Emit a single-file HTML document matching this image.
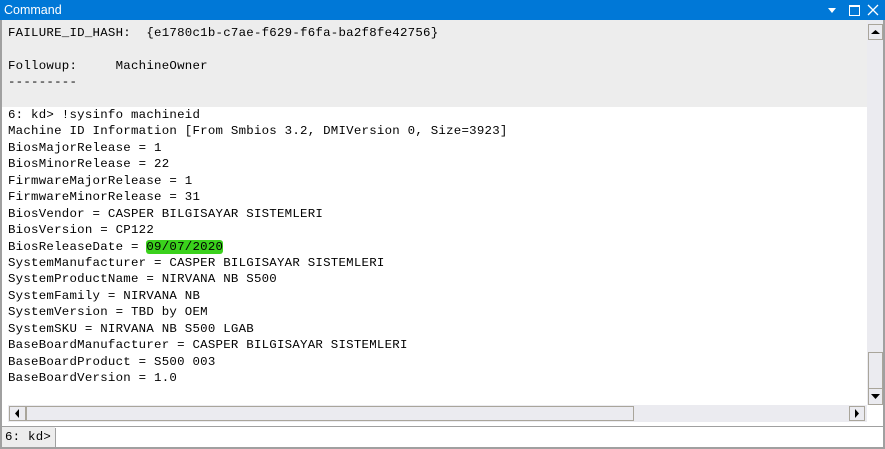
<!DOCTYPE html>
<html><head><style>
*{margin:0;padding:0;box-sizing:border-box}
body{width:885px;height:449px;overflow:hidden;background:#fff;position:relative;font-family:"Liberation Mono",monospace}
.title{position:absolute;left:0;top:0;width:885px;height:20px;background:#0078d7;color:#fff;font:12.5px "Liberation Sans",sans-serif;padding:3px 0 0 4px}
.frame{position:absolute;left:0;top:20px;width:885px;height:429px;border-left:2px solid #a0a0a0;border-right:2px solid #a0a0a0;border-bottom:2px solid #a0a0a0}
.gray{position:absolute;left:2px;top:20px;width:865px;height:87px;background:#ededed}
pre{position:absolute;left:8px;font-size:12.4px;letter-spacing:0.25px;line-height:16.43px;color:#000;font-family:"Liberation Mono",monospace}
.vs{position:absolute;left:867px;top:20px;width:16px;height:385px;background:#ebebf0}
.btn{position:absolute;border:1px solid #a9a59b;background:#ebebf0}
.hs{position:absolute;left:8px;top:405px;width:859px;height:17px;background:#ebebf0}
.hl{position:absolute;left:2px;top:426px;width:881px;height:1px;background:#a0a0a0}
.pr{position:absolute;left:2px;top:427px;width:53px;height:20px;background:#ededed;font-size:12.4px;letter-spacing:0.25px;padding:3px 0 0 3px}
.inp{position:absolute;left:55px;top:428px;width:828px;height:19px;border-left:1px solid #a0a0a0;background:#fff}
</style></head><body>
<div class="title">Command</div>
<svg style="position:absolute;left:825px;top:4px" width="60" height="14">
<polygon points="3,4 11,4 7,9" fill="#fff"/>
<rect x="24.5" y="1.5" width="10" height="10" fill="none" stroke="#fff"/><rect x="24" y="1" width="11" height="2" fill="#fff"/>
<path d="M43 1 L53 11 M53 1 L43 11" stroke="#fff" stroke-width="1.3"/>
</svg>
<div class="frame"></div>
<div class="gray"></div>
<pre style="top:25px">FAILURE_ID_HASH:  {e1780c1b-c7ae-f629-f6fa-ba2f8fe42756}

Followup:     MachineOwner
---------
</pre>
<pre style="top:107px">6: kd&gt; !sysinfo machineid
Machine ID Information [From Smbios 3.2, DMIVersion 0, Size=3923]
BiosMajorRelease = 1
BiosMinorRelease = 22
FirmwareMajorRelease = 1
FirmwareMinorRelease = 31
BiosVendor = CASPER BILGISAYAR SISTEMLERI
BiosVersion = CP122
BiosReleaseDate = <span style="background:#3ad11c;border-radius:3px">09/07/2020</span>
SystemManufacturer = CASPER BILGISAYAR SISTEMLERI
SystemProductName = NIRVANA NB S500
SystemFamily = NIRVANA NB
SystemVersion = TBD by OEM
SystemSKU = NIRVANA NB S500 LGAB
BaseBoardManufacturer = CASPER BILGISAYAR SISTEMLERI
BaseBoardProduct = S500 003
BaseBoardVersion = 1.0</pre>
<div class="vs"></div>
<div class="btn" style="left:868px;top:24px;width:15px;height:16px"><svg width="13" height="14"><polygon points="2,9 11,9 6.5,5" fill="#000"/></svg></div>
<div class="btn" style="left:868px;top:352px;width:15px;height:37px"></div>
<div class="btn" style="left:868px;top:388px;width:15px;height:17px"><svg width="13" height="15"><polygon points="2,5 11,5 6.5,10" fill="#000"/></svg></div>
<div class="hs"></div>
<div class="btn" style="left:9px;top:406px;width:17px;height:15px"><svg width="15" height="13"><polygon points="9,2 9,11 5,6.5" fill="#000"/></svg></div>
<div class="btn" style="left:26px;top:406px;width:608px;height:15px"></div>
<div class="btn" style="left:849px;top:406px;width:16px;height:15px"><svg width="14" height="13"><polygon points="5,2 5,11 9,6.5" fill="#000"/></svg></div>
<div class="hl"></div>
<div class="pr">6: kd&gt;</div>
<div class="inp"></div>
</body></html>
